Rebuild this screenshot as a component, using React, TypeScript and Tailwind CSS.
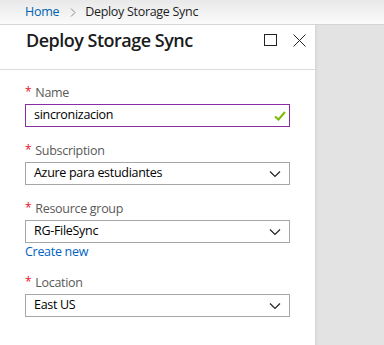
import React from 'react';

const Label = ({ text }: { text: string }) => (
  <div className="h-[18px] pt-[2px] leading-[16px] text-[12.5px] tracking-[-0.3px] text-[#595959] flex items-center">
    <span className="text-[#e81123] text-[12px] mr-[4px] mt-[-2px]">*</span>
    {text}
  </div>
);

const Chevron = () => (
  <svg width="12" height="8" viewBox="0 0 12 8" className="mr-[8px]">
    <path d="M1 1.5 L6 6.5 L11 1.5" fill="none" stroke="#222" strokeWidth="1.2" />
  </svg>
);

const Select = ({ value }: { value: string }) => (
  <div className="mt-[3px] h-[23px] w-[265px] border border-[#a6a6a6] flex items-center justify-between pl-[8px] text-[12.5px] tracking-[-0.3px] text-black">
    <span>{value}</span>
    <Chevron />
  </div>
);

export default function App() {
  return (
    <div
      className="w-[384px] h-[345px] overflow-hidden bg-[#e3e3e3] flex flex-col"
      style={{ fontFamily: '"Open Sans", "Noto Sans", sans-serif' }}
    >
      <div className="h-[25px] shrink-0 bg-gradient-to-b from-[#e9e9e9] to-[#fbfbfb] border-b border-[#d6d6d6] flex items-center pl-[25px] pt-[1px] text-[12.5px] tracking-[-0.3px]">
        <span className="text-[#0063b1]">Home</span>
        <svg width="6" height="9" viewBox="0 0 6 9" className="ml-[11px] mr-[9px]">
          <path d="M1 0.5 L5 4.5 L1 8.5" fill="none" stroke="#8a8a8a" strokeWidth="1" />
        </svg>
        <span className="text-[#1e1e1e]">Deploy Storage Sync</span>
      </div>

      <div className="flex flex-1">
        <div className="w-[315px] bg-white flex flex-col">
          <div className="h-[45px] border-b border-[#dcdcdc] flex items-start justify-between pl-[26px] pr-[9px] pt-[3px]">
            <span className="text-[18px] leading-[24px] tracking-[-0.5px] font-semibold text-[#1b1b1b]">Deploy Storage Sync</span>
            <div className="flex items-center gap-[16px] mt-[6px]">
              <svg width="13" height="13" viewBox="0 0 13 13">
                <rect x="0.5" y="0.5" width="12" height="11" fill="none" stroke="#222" strokeWidth="1" />
              </svg>
              <svg width="13" height="13" viewBox="0 0 13 13">
                <path d="M0.5 0.5 L12.5 12.5 M12.5 0.5 L0.5 12.5" fill="none" stroke="#222" strokeWidth="1" />
              </svg>
            </div>
          </div>

          <div className="pl-[25px] pt-[13px] flex flex-col">
            <Label text="Name" />
            <div className="mt-[3px] h-[23px] w-[265px] border border-[#8a2da5] flex items-center justify-between pl-[8px] text-[12.5px] tracking-[-0.3px] text-black">
              <span>sincronizacion</span>
              <svg width="12" height="10" viewBox="0 0 12 10" className="mr-[3px]">
                <path d="M1 5.5 L4.5 8.5 L11 1" fill="none" stroke="#7fba00" strokeWidth="2" />
              </svg>
            </div>

            <div className="mt-[14px]">
              <Label text="Subscription" />
              <Select value="Azure para estudiantes" />
            </div>

            <div className="mt-[14px]">
              <Label text="Resource group" />
              <Select value="RG-FileSync" />
              <div className="h-[18px] leading-[18px] text-[12.5px] tracking-[-0.3px] text-[#0062c4]">Create new</div>
            </div>

            <div className="mt-[12px]">
              <Label text="Location" />
              <Select value="East US" />
            </div>
          </div>
        </div>
        <div className="flex-1 shadow-[inset_3px_0_3px_-2px_rgba(0,0,0,0.08)]" />
      </div>
    </div>
  );
}
